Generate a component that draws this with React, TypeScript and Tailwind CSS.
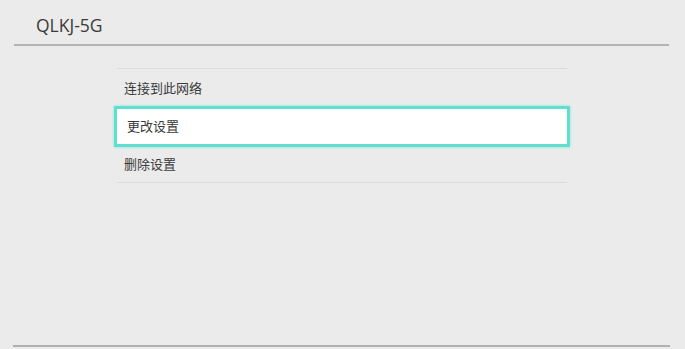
export default function App() {
  const font = { fontFamily: '"Open Sans", "Noto Sans CJK SC", sans-serif' };
  return (
    <div
      className="w-[685px] h-[349px] bg-[#ebebeb] flex flex-col text-[#333333] overflow-hidden"
      style={font}
    >
      <div className="ml-[14px] mr-[16px] h-[46px] pt-[8px] border-b-2 border-[#b3b3b3] flex items-center pl-[22px] shrink-0">
        <span className="text-[17.5px] text-[#3a3a3a] leading-none">QLKJ-5G</span>
      </div>
      <div className="mt-[22px] ml-[117px] w-[450px] border-t border-[#dcdcdc] flex flex-col shrink-0">
        <div className="h-[37px] pt-[3px] pl-[7px] flex items-center text-[13px] text-[#3a3a3a]">连接到此网络</div>
        <div className="h-[41px] -mx-[3px] pl-[10px] flex items-center text-[13px] text-[#3a3a3a] bg-white border-[3px] border-[#5fdfd0] shadow-[0_0_3px_#86e9dd]">
          更改设置
        </div>
        <div className="h-[36px] pl-[7px] flex items-center text-[13px] text-[#3a3a3a] border-b border-[#dcdcdc]">删除设置</div>
      </div>
      <div className="mt-auto mx-[13px] mr-[15px] mb-[2px] border-b-2 border-[#b0b0b0] shrink-0" />
    </div>
  );
}
